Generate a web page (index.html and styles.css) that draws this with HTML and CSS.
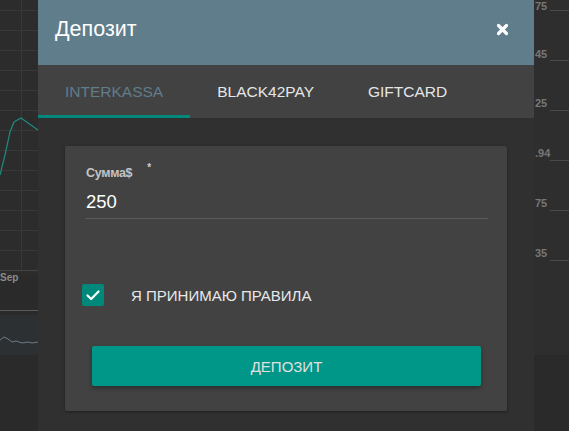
FILE: index.html
```html
<!DOCTYPE html>
<html lang="ru">
<head>
<meta charset="utf-8">
<title>Депозит</title>
<link rel="stylesheet" href="styles.css">
</head>
<body>
<svg class="backdrop" width="569" height="431" viewBox="0 0 569 431" xmlns="http://www.w3.org/2000/svg">
  <rect x="0" y="0" width="569" height="431" fill="#2a2a2a"/>
  <rect x="0" y="0" width="38" height="275" fill="#2c2c2c"/>
  <g stroke="#383838" stroke-width="1">
    <line x1="0" y1="10.5" x2="38" y2="10.5"/>
    <line x1="0" y1="30.5" x2="38" y2="30.5"/>
    <line x1="0" y1="50.5" x2="38" y2="50.5"/>
    <line x1="0" y1="70.5" x2="38" y2="70.5"/>
    <line x1="0" y1="90.5" x2="38" y2="90.5"/>
    <line x1="0" y1="110.5" x2="38" y2="110.5"/>
    <line x1="0" y1="130.5" x2="38" y2="130.5"/>
    <line x1="0" y1="150.5" x2="38" y2="150.5"/>
    <line x1="0" y1="170.5" x2="38" y2="170.5"/>
    <line x1="0" y1="190.5" x2="38" y2="190.5"/>
    <line x1="0" y1="210.5" x2="38" y2="210.5"/>
    <line x1="0" y1="230.5" x2="38" y2="230.5"/>
    <line x1="0" y1="250.5" x2="38" y2="250.5"/>
    <line x1="21.5" y1="0" x2="21.5" y2="270"/>
  </g>
  <line x1="0" y1="270.5" x2="38" y2="270.5" stroke="#444"/>
  <path d="M0 175 L5 155 L10 132 L14 122 L21 118 L28 123 L38 130" fill="none" stroke="#1f8a80" stroke-width="1.2"/>
  <text x="0" y="281" fill="#8a8a8a" font-family="Liberation Sans, Arial, sans-serif" font-size="10" font-weight="bold">Sep</text>
  <line x1="0" y1="310.5" x2="38" y2="310.5" stroke="#5a5a5a"/>
  <rect x="0" y="315" width="38" height="40" fill="#2d3033"/>
  <path d="M0 340 L4 337 L8 339 L12 342 L16 341 L22 343 L28 342 L32 343 L38 342" fill="none" stroke="#6c7a86" stroke-width="1"/>
  <rect x="534" y="0" width="35" height="355" fill="#2e2e2e"/>
  <g stroke="#4a4a4a" stroke-width="1">
    <line x1="550" y1="10.5" x2="569" y2="10.5"/>
    <line x1="550" y1="60.5" x2="569" y2="60.5"/>
    <line x1="550" y1="110.5" x2="569" y2="110.5"/>
    <line x1="550" y1="160.5" x2="569" y2="160.5"/>
    <line x1="550" y1="210.5" x2="569" y2="210.5"/>
    <line x1="550" y1="260.5" x2="569" y2="260.5"/>
  </g>
  <g fill="#777777" font-family="Liberation Sans, Arial, sans-serif" font-size="11" font-weight="bold">
    <text x="535" y="10">75</text>
    <text x="535" y="58">45</text>
    <text x="535" y="107">25</text>
    <text x="535" y="157">.94</text>
    <text x="535" y="207">75</text>
    <text x="535" y="257">35</text>
  </g>
</svg>

<div class="modal">
  <div class="modal-header">
    <h1 class="modal-title">Депозит</h1>
    <svg class="close" width="13" height="13" viewBox="0 0 13 13" xmlns="http://www.w3.org/2000/svg">
      <path d="M2.5 2.5 L10.5 10.5 M10.5 2.5 L2.5 10.5" stroke="#ffffff" stroke-width="3.2" stroke-linecap="round"/>
    </svg>
  </div>
  <div class="tabs">
    <div class="tab active">INTERKASSA</div>
    <div class="tab">BLACK42PAY</div>
    <div class="tab">GIFTCARD</div>
  </div>
  <div class="modal-body">
    <div class="card">
      <div class="field">
        <div class="label">Сумма$<span class="req">*</span></div>
        <div class="value">250</div>
      </div>
      <div class="agree">
        <span class="checkbox">
          <svg width="22" height="22" viewBox="0 0 22 22" xmlns="http://www.w3.org/2000/svg">
            <path d="M5.5 11.5 L9.2 15 L16.5 7.5" fill="none" stroke="#ffffff" stroke-width="2.2" stroke-linecap="round" stroke-linejoin="round"/>
          </svg>
        </span>
        <span class="agree-text">Я ПРИНИМАЮ ПРАВИЛА</span>
      </div>
      <div class="btn">ДЕПОЗИТ</div>
    </div>
  </div>
</div>
</body>
</html>
```

FILE: styles.css
```css
* { box-sizing: border-box; }
html, body {
  margin: 0;
  padding: 0;
  width: 569px;
  height: 431px;
  overflow: hidden;
  background: #2a2a2a;
  font-family: "Liberation Sans", Arial, sans-serif;
}
.backdrop {
  position: absolute;
  left: 0;
  top: 0;
  display: block;
}
.modal {
  position: absolute;
  left: 38px;
  top: 0;
  width: 496px;
  height: 431px;
  background: #303030;
  display: flex;
  flex-direction: column;
}
.modal-header {
  height: 65px;
  background: #607d8b;
  display: flex;
  align-items: center;
  justify-content: space-between;
  padding: 0 25px 0 17px;
}
.modal-title {
  margin: 0;
  font-size: 21.5px;
  font-weight: normal;
  color: #ffffff;
  line-height: 1;
  padding-bottom: 6px;
}
.close {
  display: block;
  margin-top: -6px;
}
.tabs {
  height: 53px;
  background: #424242;
  display: flex;
}
.tab {
  padding: 0 27px;
  display: flex;
  align-items: center;
  font-size: 15.5px;
  color: #e6e6e6;
  border-bottom: 3px solid transparent;
  padding-top: 3px;
}
.tab.active {
  color: #607d8b;
  border-bottom-color: #00897b;
}
.modal-body {
  flex: 1;
  padding: 28px 27px 0;
}
.card {
  width: 442px;
  height: 265px;
  background: #424242;
  border-radius: 2px;
  box-shadow: 0 1px 3px rgba(0,0,0,0.4);
  padding: 0 19px 0 21px;
  display: flex;
  flex-direction: column;
}
.field {
  padding-top: 19px;
  border-bottom: 1px solid #5a5a5a;
  height: 73px;
  margin-left: -1px;
  padding-left: 1px;
}
.label {
  font-size: 12.5px;
  font-weight: bold;
  color: #c4c4c4;
  letter-spacing: -0.3px;
  height: 14px;
  line-height: 14px;
  margin-top: 1px;
}
.req {
  font-size: 10px;
  margin-left: 15px;
  position: relative;
  top: -6px;
  color: #d0d0d0;
}
.value {
  margin-top: 11px;
  font-size: 18.5px;
  color: #ffffff;
  line-height: 22px;
}
.agree {
  margin-top: 65px;
  display: flex;
  align-items: center;
  margin-left: -4px;
}
.checkbox {
  width: 22px;
  height: 22px;
  background: #00897b;
  border-radius: 2px;
  display: block;
}
.checkbox svg { display: block; }
.agree-text {
  margin-left: 27px;
  font-size: 15px;
  color: #e8e8e8;
}
.btn {
  margin-top: 40px;
  margin-left: 6px;
  width: 389px;
  height: 40px;
  background: #009688;
  border-radius: 2px;
  box-shadow: 0 2px 4px rgba(0,0,0,0.35);
  display: flex;
  align-items: center;
  justify-content: center;
  color: #e0e0e0;
  font-size: 15px;
}
```
